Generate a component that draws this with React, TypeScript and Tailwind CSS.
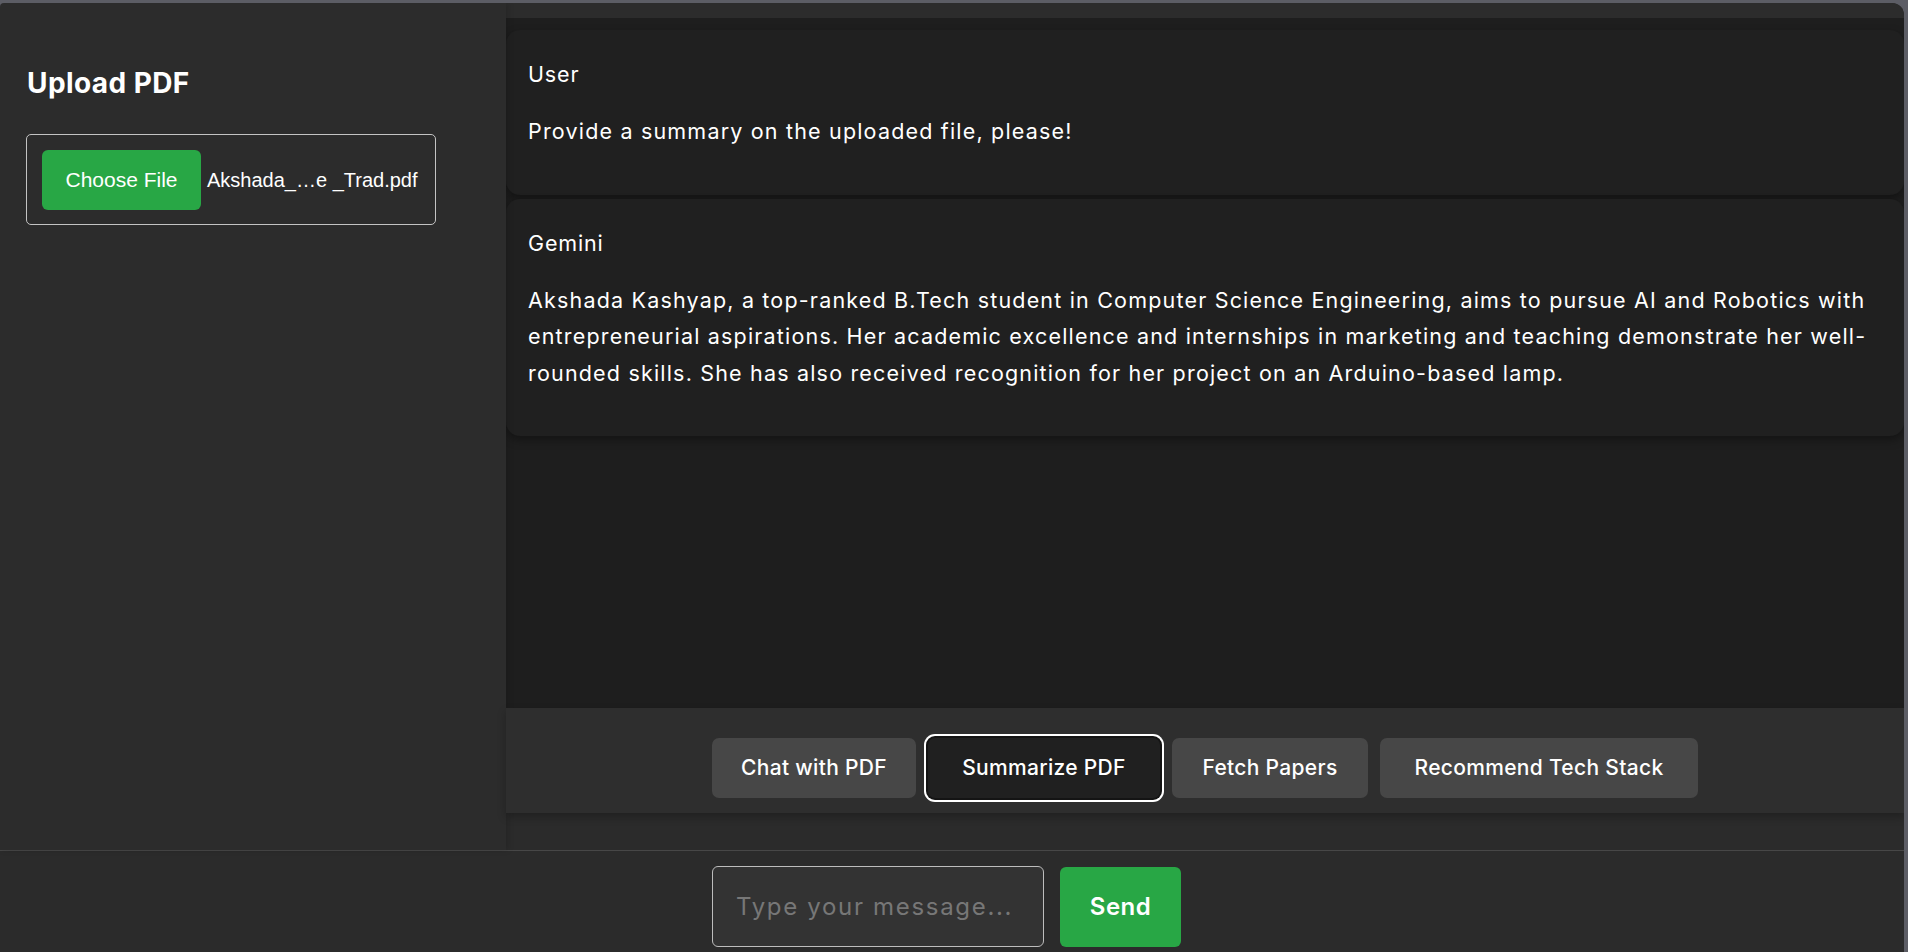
import { useState } from "react";

const buttons = [
  { label: "Chat with PDF", w: "w-[204px]" },
  { label: "Summarize PDF", w: "w-[232px]" },
  { label: "Fetch Papers", w: "w-[196px]" },
  { label: "Recommend Tech Stack", w: "w-[318px]" },
];

function Card({ who, children }: { who: string; children: React.ReactNode }) {
  return (
    <div className="bg-[#202020] rounded-[14px] px-[22px] pt-[29px] pb-[45px] shadow-[0_4px_10px_rgba(0,0,0,0.35)]">
      <div className="text-[21.5px] leading-[30px] text-white tracking-[0.04em]">{who}</div>
      <p className="mt-[24px] text-[21.5px] leading-[36.5px] text-white tracking-[0.055em] whitespace-nowrap">
        {children}
      </p>
    </div>
  );
}

export default function App() {
  const [mode, setMode] = useState("Summarize PDF");

  return (
    <div className="h-screen bg-[#5c5d65] pt-[3px] pr-[4px] overflow-hidden [font-family:Inter,sans-serif]">
      <div className="h-[949px] bg-[#2c2c2c] rounded-tl-[4px] rounded-tr-[12px] overflow-hidden flex flex-col">
        <div className="flex h-[847px] shrink-0">
          <aside className="w-[506px] shrink-0 px-[26px] pt-[59px] relative z-10 shadow-[2px_0_6px_rgba(0,0,0,0.15)]">
            <h2 className="text-[28px] leading-[42px] font-bold text-white pl-[1px] tracking-[0.015em]">Upload PDF</h2>
            <div className="mt-[30px] w-[410px] h-[91px] border border-[#c4c4c4] rounded-[5px] p-[15px] flex items-center gap-[6px] [font-family:'Liberation_Sans',Arial,sans-serif]">
              <button className="w-[159px] h-[60px] shrink-0 bg-[#28a745] rounded-[6px] text-white text-[21px]">
                Choose File
              </button>
              <span className="text-white text-[20px] whitespace-nowrap">Akshada_…e _Trad.pdf</span>
            </div>
          </aside>

          <main className="flex-1 flex flex-col pt-[15px] bg-[#2c2c2c]">
            <div className="h-[690px] shrink-0 bg-[#1e1e1e] pt-[12px] flex flex-col gap-[4px] overflow-hidden">
              <Card who="User">Provide a summary on the uploaded file, please!</Card>
              <Card who="Gemini">
                Akshada Kashyap, a top-ranked B.Tech student in Computer Science Engineering, aims to pursue AI and
                Robotics with
                <br />
                entrepreneurial aspirations. Her academic excellence and internships in marketing and teaching
                demonstrate her well-
                <br />
                rounded skills. She has also received recognition for her project on an Arduino-based lamp.
              </Card>
            </div>

            <div className="h-[105px] shrink-0 bg-[#2e2e2e] shadow-[0_4px_8px_rgba(0,0,0,0.25)] pt-[30px] flex justify-center gap-3 relative z-10">
              {buttons.map((b) => (
                <button
                  key={b.label}
                  onClick={() => setMode(b.label)}
                  className={
                    b.w +
                    " h-[60px] rounded-[7px] text-white text-[21px] font-medium tracking-[0.015em] " +
                    (mode === b.label
                      ? "bg-[#202020] ring-2 ring-white ring-offset-2 ring-offset-[#141414]"
                      : "bg-[#474747]")
                  }
                >
                  {b.label}
                </button>
              ))}
            </div>
            <div className="flex-1 bg-[#2b2b2b]" />
          </main>
        </div>

        <div className="flex-1 border-t border-[#474747] bg-[#2b2b2b] pt-[15px] flex justify-center gap-4 pr-[11px]">
          <input
            placeholder="Type your message..."
            className="w-[332px] h-[81px] bg-[#333333] border border-[#bdbdbd] rounded-[6px] px-[23px] text-[24px] tracking-[0.07em] text-white placeholder:text-[#777777] outline-none"
          />
          <button className="w-[121px] h-[80px] mt-[1px] bg-[#28a745] rounded-[6px] text-white text-[24px] font-semibold tracking-[0.02em]">
            Send
          </button>
        </div>
      </div>
    </div>
  );
}
